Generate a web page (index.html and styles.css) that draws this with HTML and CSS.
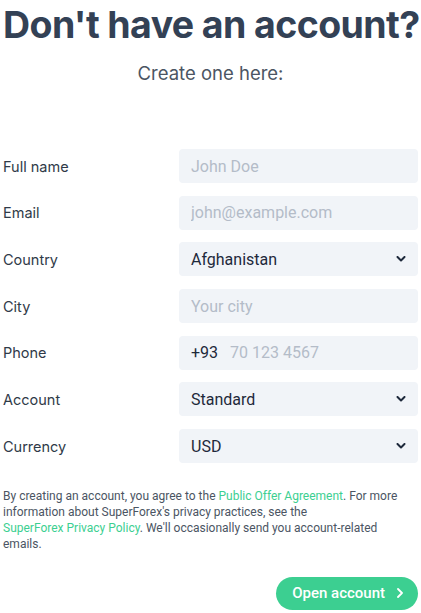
FILE: index.html
```html
<!DOCTYPE html>
<html lang="en">
<head>
    <meta charset="UTF-8">
    <meta name="viewport" content="width=device-width, initial-scale=1.0">
    <title>Open account</title>
    <link rel="stylesheet" href="styles.css">
</head>
<body>
    <div class="page">
        <h1>Don't have an account?</h1>
        <p class="subtitle">Create one here:</p>

        <form class="signup">
            <label class="row">
                <span class="label">Full name</span>
                <input class="field" type="text" placeholder="John Doe">
            </label>
            <label class="row">
                <span class="label">Email</span>
                <input class="field" type="email" placeholder="john@example.com">
            </label>
            <label class="row">
                <span class="label">Country</span>
                <span class="field select">Afghanistan
                    <svg class="chev" viewBox="0 0 10 6"><path d="M1.5 1l3.5 3.5L8.5 1"/></svg>
                </span>
            </label>
            <label class="row">
                <span class="label">City</span>
                <input class="field" type="text" placeholder="Your city">
            </label>
            <label class="row">
                <span class="label">Phone</span>
                <span class="field phone"><b>+93</b><input type="tel" placeholder="70 123 4567"></span>
            </label>
            <label class="row">
                <span class="label">Account</span>
                <span class="field select">Standard
                    <svg class="chev" viewBox="0 0 10 6"><path d="M1.5 1l3.5 3.5L8.5 1"/></svg>
                </span>
            </label>
            <label class="row">
                <span class="label">Currency</span>
                <span class="field select">USD
                    <svg class="chev" viewBox="0 0 10 6"><path d="M1.5 1l3.5 3.5L8.5 1"/></svg>
                </span>
            </label>

            <p class="legal">
                By creating an account, you agree to the <a href="#">Public Offer Agreement</a>. For more
                information about SuperForex's privacy practices, see the
                <a href="#">SuperForex Privacy Policy</a>. We'll occasionally send you account-related
                emails.
            </p>

            <div class="actions">
                <button type="button" class="submit">Open account
                    <svg viewBox="0 0 6 10"><path d="M1 1l4 4-4 4"/></svg>
                </button>
            </div>
        </form>
    </div>
</body>
</html>
```

FILE: styles.css
```css
body {
    margin: 0;
    background: #fff;
    font-family: Inter, 'Noto Sans', sans-serif;
    color: #374151;
}

.page {
    padding: 0 3px 0 3px;
}

h1 {
    margin: 0;
    padding-top: 3px;
    font-size: 37.5px;
    line-height: 43px;
    font-weight: 700;
    letter-spacing: -0.6px;
    color: #334155;
    white-space: nowrap;
    text-align: center;
}

.subtitle {
    margin: 14px 0 0;
    text-align: center;
    font-size: 18.5px;
    line-height: 26px;
    color: #4b5563;
}

.signup {
    margin-top: 63px;
    display: flex;
    flex-direction: column;
    gap: 12.7px;
}

.row {
    display: grid;
    grid-template-columns: 176px minmax(0, 1fr);
    align-items: center;
}

.label {
    font-size: 14.5px;
    color: #2f3a48;
}

.field {
    box-sizing: border-box;
    height: 34px;
    width: 100%;
    border: none;
    border-radius: 4px;
    background: #f1f4f8;
    padding: 0 12px;
    font-family: Roboto, sans-serif;
    font-size: 16px;
    color: #1e293b;
    outline: none;
}

.field::placeholder,
.phone input::placeholder {
    color: #b4bcc8;
}

.select {
    display: flex;
    align-items: center;
    justify-content: space-between;
}

.chev {
    width: 10px;
    height: 6px;
    fill: none;
    stroke: #1e293b;
    stroke-width: 2;
    stroke-linecap: round;
    stroke-linejoin: round;
}

.phone {
    display: flex;
    align-items: center;
    gap: 12px;
}

.phone b {
    font-weight: 400;
}

.phone input {
    border: none;
    background: transparent;
    outline: none;
    flex: 1;
    width: 0;
    min-width: 0;
    padding: 0;
    font-family: Roboto, sans-serif;
    font-size: 16px;
    color: #1e293b;
}

.legal {
    margin: 12px 0 0;
    font-family: Roboto, sans-serif;
    font-size: 12px;
    line-height: 16px;
    color: #4b5563;
}

.legal a {
    color: #3ccf91;
    text-decoration: none;
    white-space: nowrap;
}

.actions {
    display: flex;
    justify-content: flex-end;
    margin-top: 12px;
}

.submit {
    display: flex;
    align-items: center;
    gap: 12px;
    height: 33px;
    padding: 0 15px 0 16px;
    border: none;
    border-radius: 17px;
    background: #3ccf91;
    color: #fff;
    font-family: Roboto, sans-serif;
    font-size: 15px;
    font-weight: 500;
    cursor: pointer;
}

.submit svg {
    width: 6px;
    height: 10px;
    fill: none;
    stroke: #fff;
    stroke-width: 1.8;
    stroke-linecap: round;
    stroke-linejoin: round;
}
```
